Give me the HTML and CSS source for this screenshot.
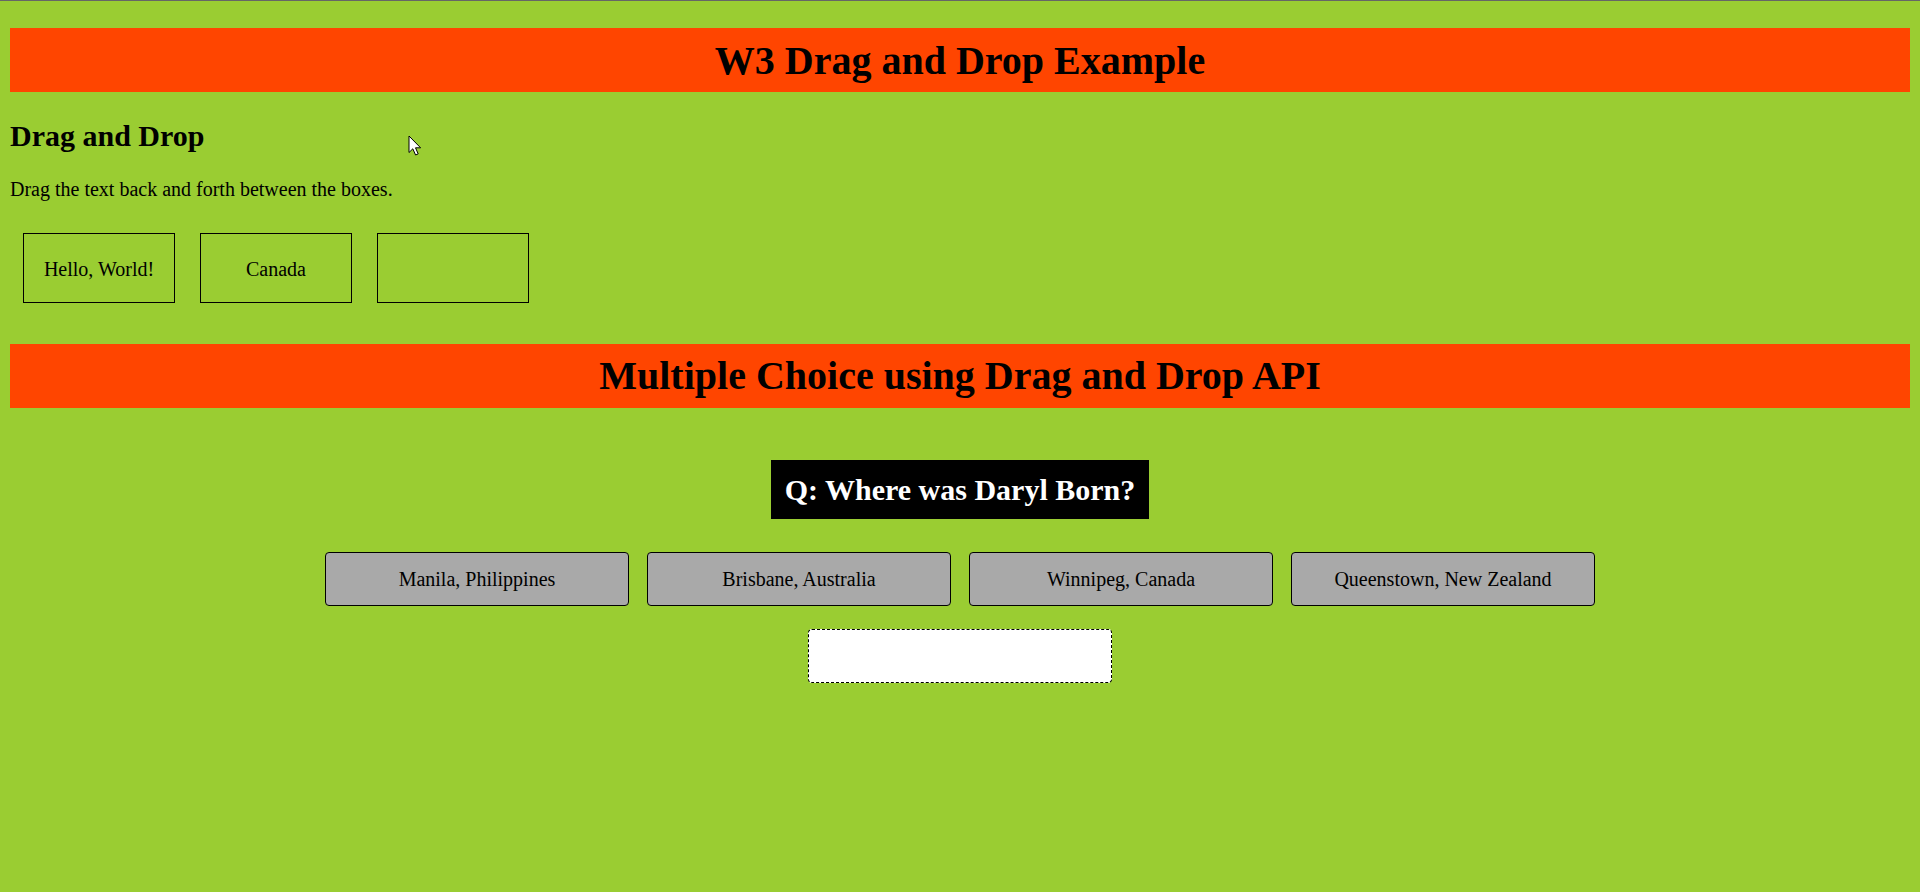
FILE: index.html
```html
<!DOCTYPE html>
<html lang="en">
<head>
<meta charset="utf-8">
<title>W3 Drag and Drop Example</title>
<link rel="stylesheet" href="styles.css">
</head>
<body>
  <h1 class="banner banner-first">W3 Drag and Drop Example</h1>
  <h2 class="section-title">Drag and Drop</h2>
  <p class="intro">Drag the text back and forth between the boxes.</p>
  <div class="box-row">
    <div class="drag-box">Hello, World!</div>
    <div class="drag-box">Canada</div>
    <div class="drag-box"></div>
  </div>

  <h1 class="banner banner-second">Multiple Choice using Drag and Drop API</h1>
  <div class="quiz">
    <h2 class="question">Q: Where was Daryl Born?</h2>
    <div class="answers">
      <div class="answer">Manila, Philippines</div>
      <div class="answer">Brisbane, Australia</div>
      <div class="answer">Winnipeg, Canada</div>
      <div class="answer">Queenstown, New Zealand</div>
    </div>
    <div class="drop-zone"></div>
  </div>

  <svg class="cursor" width="14" height="22" viewBox="0 0 14 22" aria-hidden="true">
    <path d="M1 1 L1 17.5 L4.8 13.8 L7.6 20 L10.2 18.9 L7.5 12.8 L12.6 12.8 Z" fill="#fff" stroke="#000" stroke-width="1" stroke-linejoin="round"/>
  </svg>
</body>
</html>
```
FILE: styles.css
```css
html {
  background: #9acd32;
  border-top: 1px solid #666666;
}

body {
  margin: 0 10px;
  font-family: "Liberation Serif", "Times New Roman", serif;
  color: #000;
}

.banner {
  margin: 0;
  padding: 9px 0;
  font-size: 40px;
  line-height: 46px;
  font-weight: bold;
  text-align: center;
  background: #ff4500;
}

.banner-first {
  margin-top: 27px;
  padding: 10px 0 8px;
}

.banner-second {
  margin-top: 41px;
}

.section-title {
  margin: 27px 0 0;
  font-size: 30px;
  line-height: 34px;
  font-weight: bold;
}

.intro {
  margin: 25px 0 0;
  font-size: 20px;
  line-height: 23px;
}

.box-row {
  display: flex;
  gap: 25px;
  margin-top: 32px;
  padding-left: 13px;
}

.drag-box {
  box-sizing: border-box;
  width: 152px;
  height: 70px;
  padding-top: 2px;
  border: 1px solid #000;
  display: flex;
  align-items: center;
  justify-content: center;
  font-size: 20px;
  line-height: 23px;
}

.quiz {
  display: flex;
  flex-direction: column;
  align-items: center;
}

.question {
  margin: 52px 0 0;
  padding: 12px 14px;
  background: #000;
  color: #fff;
  font-size: 30px;
  line-height: 35px;
  font-weight: bold;
}

.answers {
  display: flex;
  gap: 18px;
  margin-top: 33px;
}

.answer {
  box-sizing: border-box;
  width: 304px;
  height: 54px;
  border: 1px solid #000;
  border-radius: 4px;
  background: #a9a9a9;
  display: flex;
  align-items: center;
  justify-content: center;
  font-size: 20px;
  line-height: 23px;
}

.drop-zone {
  box-sizing: border-box;
  width: 304px;
  height: 54px;
  margin-top: 23px;
  border: 1px dashed #000;
  border-radius: 4px;
  background: #fff;
}

.cursor {
  position: absolute;
  left: 408px;
  top: 135px;
  pointer-events: none;
}
```
